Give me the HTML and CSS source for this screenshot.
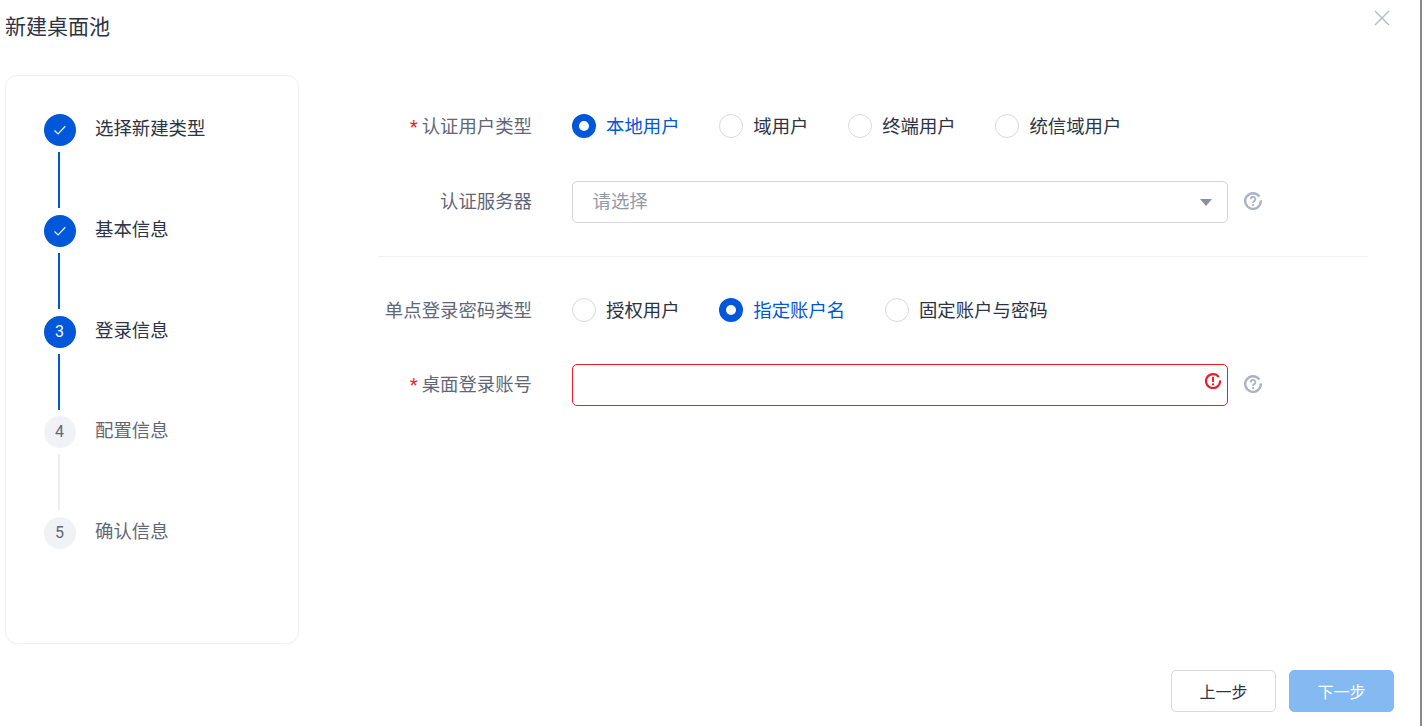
FILE: index.html
```html
<!DOCTYPE html>
<html lang="zh-CN">
<head>
<meta charset="utf-8">
<title>新建桌面池</title>
<link rel="stylesheet" href="styles.css">
</head>
<body>
<div class="dialog">
  <header class="head">
    <h1 class="title">新建桌面池</h1>
    <button class="close" aria-label="关闭">
      <svg width="16" height="16" viewBox="0 0 16 16"><path d="M1 1l14 14M15 1L1 15" fill="none" stroke="#b4b9c6" stroke-width="1.4"/></svg>
    </button>
  </header>
  <div class="main">
    <aside class="card">
      <ol class="steps">
        <li class="step done">
          <div class="rail">
            <span class="dot"><svg width="14" height="14" viewBox="0 0 14 14"><path d="M1.5 7.5l3.6 3.4 7.2-7.6" fill="none" stroke="#e8f0fd" stroke-width="1.3"/></svg></span>
            <span class="line"></span>
          </div>
          <span class="name">选择新建类型</span>
        </li>
        <li class="step done">
          <div class="rail">
            <span class="dot"><svg width="14" height="14" viewBox="0 0 14 14"><path d="M1.5 7.5l3.6 3.4 7.2-7.6" fill="none" stroke="#e8f0fd" stroke-width="1.3"/></svg></span>
            <span class="line"></span>
          </div>
          <span class="name">基本信息</span>
        </li>
        <li class="step done">
          <div class="rail">
            <span class="dot num">3</span>
            <span class="line"></span>
          </div>
          <span class="name">登录信息</span>
        </li>
        <li class="step">
          <div class="rail">
            <span class="dot num">4</span>
            <span class="line"></span>
          </div>
          <span class="name">配置信息</span>
        </li>
        <li class="step">
          <div class="rail">
            <span class="dot num">5</span>
          </div>
          <span class="name">确认信息</span>
        </li>
      </ol>
    </aside>
    <form class="form">
      <div class="row row-radio">
        <label class="label"><i class="req">*</i>认证用户类型</label>
        <div class="radios">
          <span class="radio on"><i class="ring"></i>本地用户</span>
          <span class="radio"><i class="ring"></i>域用户</span>
          <span class="radio"><i class="ring"></i>终端用户</span>
          <span class="radio"><i class="ring"></i>统信域用户</span>
        </div>
      </div>
      <div class="row row-input">
        <label class="label">认证服务器</label>
        <div class="field">
          <span class="placeholder">请选择</span>
          <i class="caret"></i>
        </div>
        <svg class="help" width="18" height="18" viewBox="0 0 18 18"><path d="M15.4 4.5A7.8 7.8 0 1 0 16.8 8.3" fill="none" stroke="#adb3c1" stroke-width="2.4"/><path d="M6.7 7.2A2.3 2.3 0 1 1 9.9 9.3C9.2 9.7 9 10 9 10.9" fill="none" stroke="#adb3c1" stroke-width="1.8"/><circle cx="9" cy="13.2" r="1.1" fill="#adb3c1"/></svg>
      </div>
      <hr class="divider">
      <div class="row row-radio">
        <label class="label">单点登录密码类型</label>
        <div class="radios">
          <span class="radio"><i class="ring"></i>授权用户</span>
          <span class="radio on"><i class="ring"></i>指定账户名</span>
          <span class="radio"><i class="ring"></i>固定账户与密码</span>
        </div>
      </div>
      <div class="row row-input row-last">
        <label class="label"><i class="req">*</i>桌面登录账号</label>
        <div class="field error">
          <svg class="err" width="16" height="16" viewBox="0 0 16 16"><path d="M13.7 4A7 7 0 1 0 15 7.4" fill="none" stroke="#ee1c25" stroke-width="2.2"/><path d="M8 3.8V9" fill="none" stroke="#ee1c25" stroke-width="1.9"/><circle cx="8" cy="11.4" r="1.1" fill="#ee1c25"/></svg>
        </div>
        <svg class="help" width="18" height="18" viewBox="0 0 18 18"><path d="M15.4 4.5A7.8 7.8 0 1 0 16.8 8.3" fill="none" stroke="#adb3c1" stroke-width="2.4"/><path d="M6.7 7.2A2.3 2.3 0 1 1 9.9 9.3C9.2 9.7 9 10 9 10.9" fill="none" stroke="#adb3c1" stroke-width="1.8"/><circle cx="9" cy="13.2" r="1.1" fill="#adb3c1"/></svg>
      </div>
    </form>
  </div>
  <footer class="foot">
    <button class="btn">上一步</button>
    <button class="btn primary">下一步</button>
  </footer>
</div>
</body>
</html>
```

FILE: styles.css
```css
* { box-sizing: border-box; }
html, body { margin: 0; padding: 0; background: #fff; }
body {
  font-family: Roboto, "Noto Sans CJK SC", sans-serif;
  color: #2c3345;
}
.dialog {
  width: 1422px;
  height: 726px;
  overflow: hidden;
  border-right: 2px solid #8a8a8a;
  display: flex;
  flex-direction: column;
}
.head {
  height: 75px;
  display: flex;
  align-items: flex-start;
  justify-content: space-between;
  padding: 13px 30px 0 5px;
}
.title {
  margin: 0;
  font-size: 21px;
  font-weight: 400;
  line-height: 28px;
  color: #2c3345;
}
.close {
  border: 0;
  background: none;
  padding: 0;
  margin: -3px 0 0;
  width: 16px;
  height: 16px;
  display: flex;
}
.main {
  display: flex;
  height: 569px;
  padding-left: 5px;
}
.card {
  width: 294px;
  height: 569px;
  border: 1px solid #eef0f6;
  border-radius: 12px;
  padding: 38px 0 0 38px;
}
.steps {
  list-style: none;
  margin: 0;
  padding: 0;
}
.step {
  display: flex;
  height: 100.75px;
  gap: 19px;
}
.rail {
  width: 32px;
  display: flex;
  flex-direction: column;
  align-items: center;
}
.dot {
  width: 32px;
  height: 32px;
  flex: none;
  border-radius: 50%;
  background: #f1f2f5;
  color: #5f6779;
  font-size: 16px;
  display: flex;
  align-items: center;
  justify-content: center;
}
.num { padding: 0 1px 1px 0; }
.line {
  width: 2px;
  height: 56px;
  margin: 6px 2px 0 0;
  background: #eceef4;
}
.name {
  font-size: 18.4px;
  line-height: 30px;
  color: #5f6779;
}
.done .dot { background: #0057d9; color: #fff; }
.done .line { background: #0057d9; }
.done .name { color: #2c3345; }
.form {
  width: 990px;
  margin-left: 79px;
  padding-top: 33px;
}
.row {
  display: flex;
  align-items: center;
}
.row-radio { height: 36px; }
.row-input { height: 42px; margin-top: 37px; }
.row-last { margin-top: 36px; }
.label {
  width: 154px;
  margin-right: 40px;
  text-align: right;
  font-size: 18.4px;
  line-height: 24px;
  color: #5f6779;
  white-space: nowrap;
}
.row-radio .label { margin-top: 1px; }
.row-input .label { margin-bottom: 1px; }
.req {
  font-style: normal;
  color: #f5222d;
  margin-right: 4px;
}
.radios {
  display: flex;
  gap: 39.7px;
  margin-top: 2px;
}
.radio {
  display: flex;
  align-items: center;
  gap: 10px;
  font-size: 18.4px;
  line-height: 24px;
  color: #2c3345;
}
.ring {
  width: 24px;
  height: 24px;
  margin-bottom: 2px;
  border-radius: 50%;
  border: 1px solid #d6d9e2;
  background: #fff;
}
.radio.on { color: #0057d9; }
.radio.on .ring { border: 7px solid #0057d9; }
.field {
  width: 656px;
  height: 42px;
  border: 1px solid #d2d5df;
  border-radius: 5px;
  padding: 0 20px 0 19.5px;
  display: flex;
  align-items: center;
  justify-content: space-between;
  position: relative;
}
.placeholder {
  font-size: 18.4px;
  line-height: 24px;
  margin-bottom: 1px;
  color: #9499a8;
}
.caret {
  width: 0;
  height: 0;
  margin-right: -5px;
  border-left: 6px solid transparent;
  border-right: 6px solid transparent;
  border-top: 7px solid #8b90a0;
}
.field.error { border-color: #ee1c25; }
.err {
  position: absolute;
  right: 6px;
  top: 8px;
}
.help { margin: 0 0 2px 16px; }
.divider {
  border: 0;
  border-top: 1px solid #f0f1f5;
  margin: 33px 0 35px;
}
.foot {
  display: flex;
  justify-content: flex-end;
  gap: 13px;
  padding: 26px 26px 0 0;
}
.btn {
  width: 105px;
  height: 42px;
  border: 1px solid #d6d9e2;
  border-radius: 5px;
  background: #fff;
  color: #2c3345;
  font: inherit;
  font-size: 16px;
  padding: 0;
}
.btn.primary {
  border-color: #85b9f1;
  background: #85b9f1;
  color: #fff;
}
```
